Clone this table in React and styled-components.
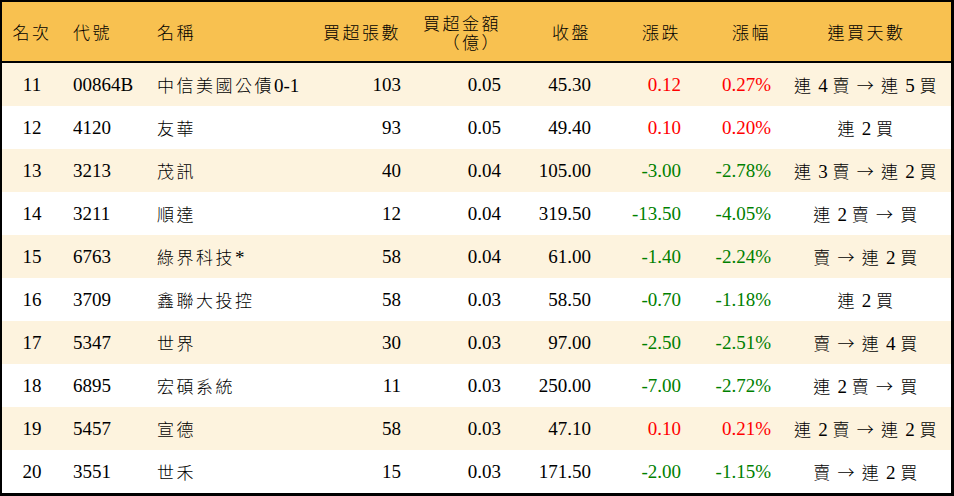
import React from 'react';
import styled, { createGlobalStyle } from 'styled-components';

const GlobalStyle = createGlobalStyle`
  body {
    margin: 0;
    background: #ffffff;
  }
`;

const Board = styled.div`
  width: 954px;
  box-sizing: border-box;
  border-style: solid;
  border-color: #000000;
  border-width: 2px 3px 3px 2px;
  font-family: 'Liberation Serif', 'Noto Sans CJK TC', serif;
  font-size: 19px;
  color: #000000;
`;

const Row = styled.div`
  display: grid;
  grid-template-columns: 60px 84px 160px 106px 100px 90px 90px 90px 169px;
  height: ${p => (p.$head ? '59px' : '43px')};
  background: ${p => (p.$head ? '#f8c150' : p.$shade ? '#fdf3de' : '#ffffff')};
  border-bottom: ${p => (p.$head ? '2px solid #000000' : 'none')};
`;

const Cell = styled.div`
  display: flex;
  flex-direction: column;
  justify-content: center;
  align-items: ${p =>
    p.$align === 'right' ? 'flex-end' : p.$align === 'center' ? 'center' : 'flex-start'};
  padding: ${p =>
    p.$align === 'right' ? '0 11px 0 0' : p.$align === 'left' ? '0 0 0 11px' : '0'};
  color: ${p => (p.$tone === 'up' ? '#ff0000' : p.$tone === 'down' ? '#008000' : '#000000')};
  white-space: nowrap;
  line-height: 19px;
`;

const Line = styled.span`
  display: block;
  height: 19px;
  line-height: 19px;
`;

const Han = styled.span`
  display: inline-block;
  font-family: 'Noto Sans CJK TC', sans-serif;
  font-weight: 300;
  font-size: 17px;
  line-height: 19px;
  letter-spacing: 2.5px;
`;

// split a string into CJK and latin runs so each gets its own face
const Txt = ({ children }) => {
  const parts = String(children).split(/([\u2190-\u21ff\u3000-\u9fff\uff00-\uffef]+)/);
  return (
    <Line>
      {parts.map((part, i) =>
        i % 2 === 1 ? <Han key={i}>{part}</Han> : part ? <span key={i}>{part}</span> : null
      )}
    </Line>
  );
};

const columns = [
  { label: '名次', align: 'center' },
  { label: '代號', align: 'left' },
  { label: '名稱', align: 'left' },
  { label: '買超張數', align: 'right' },
  { label: ['買超金額', '（億）'], align: 'right' },
  { label: '收盤', align: 'right' },
  { label: '漲跌', align: 'right' },
  { label: '漲幅', align: 'right' },
  { label: '連買天數', align: 'center' }
];

const rows = [
  ['11', '00864B', '中信美國公債0-1', '103', '0.05', '45.30', '0.12', '0.27%', '連 4 賣 → 連 5 買'],
  ['12', '4120', '友華', '93', '0.05', '49.40', '0.10', '0.20%', '連 2 買'],
  ['13', '3213', '茂訊', '40', '0.04', '105.00', '-3.00', '-2.78%', '連 3 賣 → 連 2 買'],
  ['14', '3211', '順達', '12', '0.04', '319.50', '-13.50', '-4.05%', '連 2 賣 → 買'],
  ['15', '6763', '綠界科技*', '58', '0.04', '61.00', '-1.40', '-2.24%', '賣 → 連 2 買'],
  ['16', '3709', '鑫聯大投控', '58', '0.03', '58.50', '-0.70', '-1.18%', '連 2 買'],
  ['17', '5347', '世界', '30', '0.03', '97.00', '-2.50', '-2.51%', '賣 → 連 4 買'],
  ['18', '6895', '宏碩系統', '11', '0.03', '250.00', '-7.00', '-2.72%', '連 2 賣 → 買'],
  ['19', '5457', '宣德', '58', '0.03', '47.10', '0.10', '0.21%', '連 2 賣 → 連 2 買'],
  ['20', '3551', '世禾', '15', '0.03', '171.50', '-2.00', '-1.15%', '賣 → 連 2 買']
];

const toneOf = (value, index) => {
  if (index !== 6 && index !== 7) return null;
  return value.startsWith('-') ? 'down' : 'up';
};

const App = () => (
  <>
    <GlobalStyle />
    <Board>
      <Row $head>
        {columns.map((col, i) => (
          <Cell key={i} $align={col.align}>
            {Array.isArray(col.label) ? (
              col.label.map(line => <Txt key={line}>{line}</Txt>)
            ) : (
              <Txt>{col.label}</Txt>
            )}
          </Cell>
        ))}
      </Row>
      {rows.map((row, r) => (
        <Row key={row[0]} $shade={r % 2 === 0}>
          {row.map((value, i) => (
            <Cell key={i} $align={columns[i].align} $tone={toneOf(value, i)}>
              <Txt>{value}</Txt>
            </Cell>
          ))}
        </Row>
      ))}
    </Board>
  </>
);

export default App;
